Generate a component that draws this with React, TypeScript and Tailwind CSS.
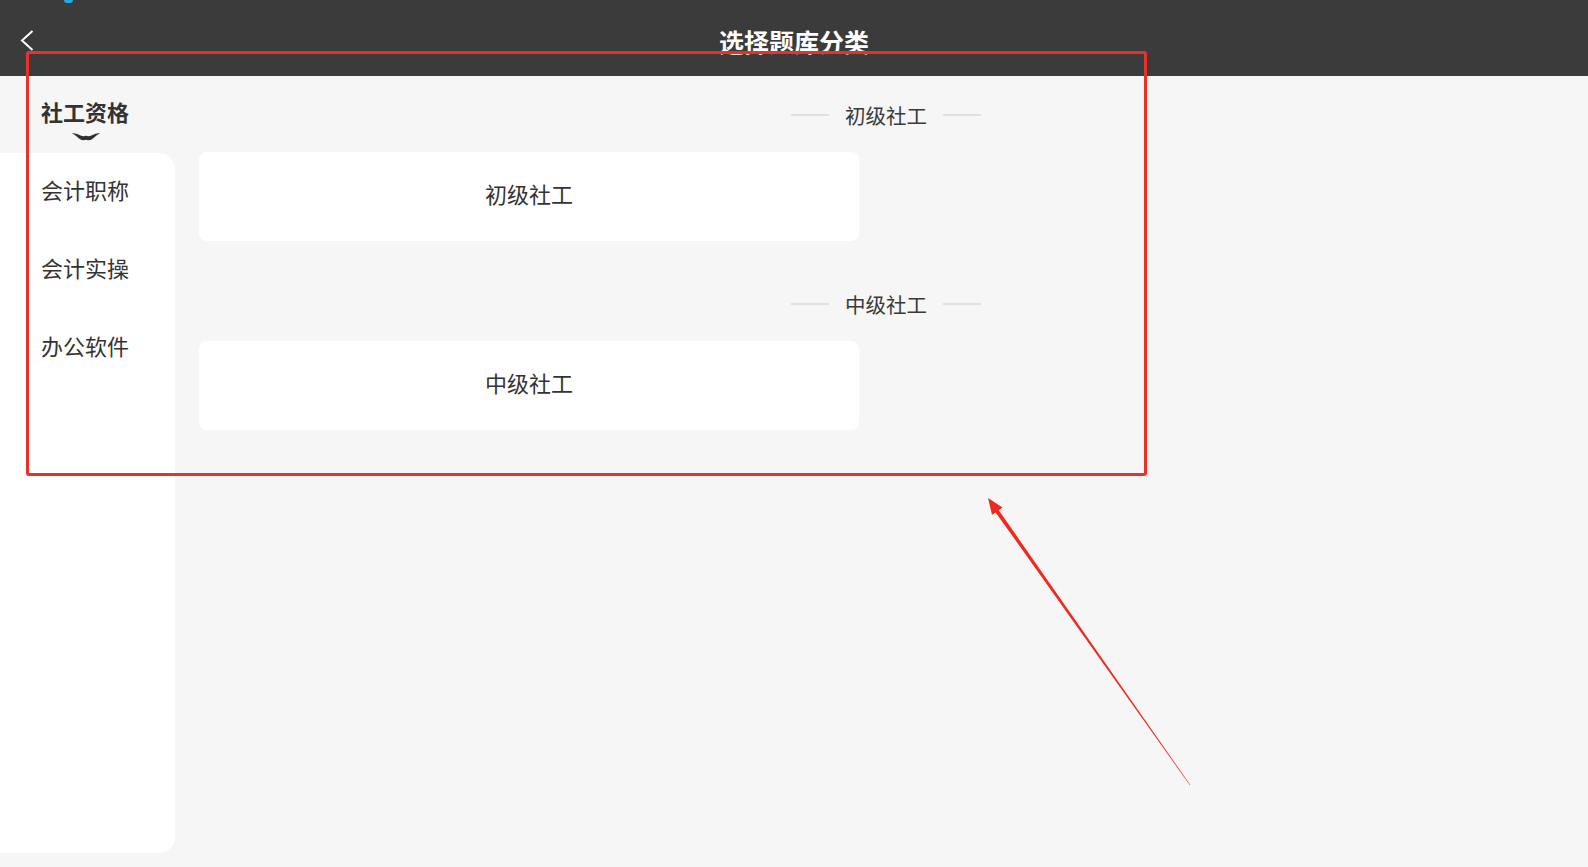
import React from "react";

const font = { fontFamily: '"Noto Sans CJK SC", "Noto Sans", sans-serif' };

function SectionLabel({ text }: { text: string }) {
  return (
    <div className="flex h-[28px] items-center justify-center">
      <div className="h-[2px] w-[38px] bg-[#e0e0e0]" />
      <span className="mx-[16px] text-[20.5px] leading-[28px] text-[#3a3a3a]">{text}</span>
      <div className="h-[2px] w-[38px] bg-[#e0e0e0]" />
    </div>
  );
}

function Card({ text }: { text: string }) {
  return (
    <div className="mt-[23px] flex h-[89px] w-[660px] items-center justify-center rounded-[8px] bg-white pb-[8px]">
      <span className="text-[22px] leading-[30px] text-[#333333]">{text}</span>
    </div>
  );
}

export default function App() {
  return (
    <div className="relative flex h-[867px] w-[1588px] flex-col overflow-hidden bg-[#f6f6f6]" style={font}>
      {/* header */}
      <div className="grid h-[76px] shrink-0 grid-cols-[1fr_auto_1fr] items-center bg-[#3b3b3b] pt-[6px]">
        <div className="flex items-center pl-[20px]">
          <svg width="14" height="22" viewBox="0 0 14 22" className="-mt-[1px]">
            <polyline points="12.5,1 2,10.5 12.5,20" fill="none" stroke="#ffffff" strokeWidth="2" strokeLinejoin="miter" />
          </svg>
        </div>
        <div className="text-[25px] font-bold leading-[34px] text-white">选择题库分类</div>
        <div />
      </div>

      {/* body */}
      <div className="flex flex-1">
        {/* sidebar */}
        <div className="flex w-[175px] shrink-0 flex-col">
          <div className="flex h-[77px] flex-col pl-[41px] pt-[20px]">
            <span className="text-[22px] font-bold leading-[30px] text-[#333333]">社工资格</span>
            <svg width="30" height="9" viewBox="0 0 30 9" className="ml-[30px] mt-[6px]">
              <path
                d="M1 1.2 Q5 0.8 9 3.2 Q12.5 5 15 3.8 Q17.5 5 21 3.2 Q25 0.8 29 1.2 Q26 2.4 22 6.4 Q18 9.2 15 7.8 Q12 9.2 8 6.4 Q4 2.4 1 1.2 Z"
                fill="#2f2f2f"
              />
            </svg>
          </div>
          <div className="flex h-[700px] flex-col rounded-r-[16px] bg-white">
            {["会计职称", "会计实操", "办公软件"].map((t) => (
              <div key={t} className="flex h-[78px] items-center pb-[6px] pl-[41px]">
                <span className="text-[22px] leading-[30px] text-[#333333]">{t}</span>
              </div>
            ))}
          </div>
        </div>

        {/* content */}
        <div className="flex flex-1 flex-col pl-[24px] pr-[15px] pt-[25px]">
          <SectionLabel text="初级社工" />
          <Card text="初级社工" />
          <div className="mt-[49px]">
            <SectionLabel text="中级社工" />
          </div>
          <Card text="中级社工" />
        </div>
      </div>

      {/* status bar remnant */}
      <div className="absolute left-[64px] top-0 h-[3px] w-[9px] rounded-b-full bg-[#2aa6d8]" />

      {/* annotation overlay */}
      <div className="pointer-events-none absolute left-[26px] top-[51px] h-[425px] w-[1121px] rounded-[3px] border-[3px] border-[#e5322b]" />
      <svg className="pointer-events-none absolute left-0 top-0" width="1588" height="867">
        <polygon
          points="988,498 1002.5,507.4 998.8,510.2 1190.3,785 1189.7,785 995.6,512.4 992,514.8"
          fill="#ee2a1e"
        />
      </svg>
    </div>
  );
}
